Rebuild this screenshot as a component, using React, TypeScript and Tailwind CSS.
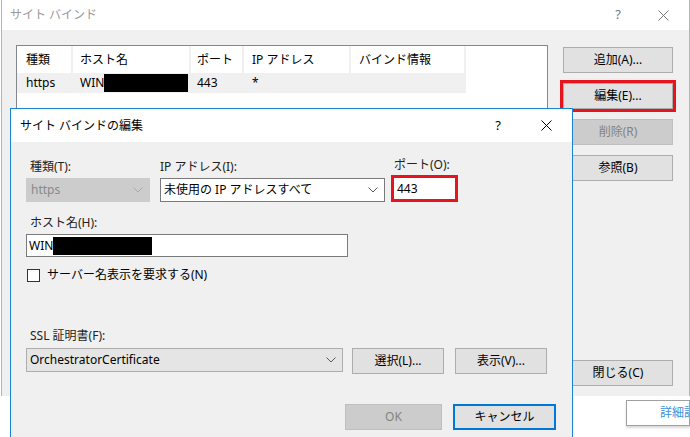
import React from 'react';

const Chevron = ({ color = '#5a5a5a' }: { color?: string }) => (
  <svg width="10" height="6" viewBox="0 0 10 6" className="shrink-0">
    <polyline points="0.5,0.5 5,5 9.5,0.5" fill="none" stroke={color} strokeWidth="1" />
  </svg>
);

const CloseX = ({ color = '#000' }: { color?: string }) => (
  <svg width="11" height="11" viewBox="0 0 11 11">
    <path d="M0.5 0.5 L10.5 10.5 M10.5 0.5 L0.5 10.5" stroke={color} strokeWidth="1" fill="none" />
  </svg>
);

const Btn = ({ label, className = '' }: { label: string; className?: string }) => (
  <div
    className={`h-[26px] flex items-center justify-center border border-[#adadad] bg-[#e1e1e1] text-[12px] text-black ${className}`}
  >
    {label}
  </div>
);

const DisabledBtn = ({ label, className = '' }: { label: string; className?: string }) => (
  <div
    className={`h-[26px] flex items-center justify-center border border-[#bfbfbf] bg-[#cccccc] text-[12px] text-[#838383] ${className}`}
  >
    {label}
  </div>
);

const EditDialog = () => (
  <div className="absolute left-[10px] top-[108px] w-[563px] h-[340px] border border-[#1883d7] bg-[#f0f0f0] flex flex-col">
    {/* Title bar */}
    <div className="h-[33px] bg-white flex items-center pl-[9px] pr-[20px] text-[12px] text-black">
      <span>サイト バインドの編集</span>
      <span className="ml-auto text-[13px] mr-[40px]">?</span>
      <CloseX />
    </div>

    <div className="pl-[15px] pr-[16px] pt-[15px] flex flex-col text-[12px] leading-[16px]">
      {/* row 1 */}
      <div className="flex items-end">
        <div className="w-[124px] flex flex-col">
          <span className="pl-[4px] text-[#222]">種類(T):</span>
          <div className="mt-[3px] h-[24px] bg-[#cccccc] border border-[#cccccc] flex items-center pl-[4px] pr-[6px] text-[#8a8a8a]">
            <span>https</span>
            <span className="ml-auto"><Chevron color="#a8a8a8" /></span>
          </div>
        </div>
        <div className="w-[225px] ml-[10px] flex flex-col">
          <span className="text-[#222]">IP アドレス(I):</span>
          <div className="mt-[3px] h-[24px] bg-white border border-[#7a7a7a] flex items-center pl-[3px] pr-[6px] text-black">
            <span>未使用の IP アドレスすべて</span>
            <span className="ml-auto"><Chevron /></span>
          </div>
        </div>
        <div className="w-[67px] ml-[6px] flex flex-col">
          <span className="pl-[3px] text-[#222]">ポート(O):</span>
          <div className="mt-[2px] h-[27px] bg-white border-[3px] border-[#e5141e] flex items-center pl-[3px] text-black">
            443
          </div>
        </div>
      </div>

      {/* host */}
      <span className="mt-[13px] pl-[4px] text-[#222]">ホスト名(H):</span>
      <div className="mt-[3px] w-[322px] h-[23px] bg-white border border-[#7a7a7a] flex items-center pl-[2px] text-black">
        <span>WIN</span>
        <span className="w-[99px] h-[18px] bg-black" />
      </div>

      {/* checkbox */}
      <div className="mt-[10px] flex items-center pl-[1px] text-black">
        <span className="w-[13px] h-[13px] border border-[#333] bg-white" />
        <span className="ml-[7px]">サーバー名表示を要求する(N)</span>
      </div>

      {/* SSL */}
      <span className="mt-[45px] pl-[4px] text-[#222]">SSL 証明書(F):</span>
      <div className="mt-[4px] flex items-start">
        <div className="w-[317px] h-[24px] bg-[#e5e5e5] border border-[#adadad] flex items-center pl-[3px] pr-[6px] text-black">
          <span>OrchestratorCertificate</span>
          <span className="ml-auto"><Chevron /></span>
        </div>
        <Btn label="選択(L)..." className="w-[92px] ml-[9px]" />
        <Btn label="表示(V)..." className="w-[92px] ml-[11px]" />
      </div>

      {/* bottom buttons */}
      <div className="mt-[30px] flex justify-end">
        <DisabledBtn label="OK" className="w-[97px]" />
        <div className="w-[103px] ml-[11px] h-[26px] flex items-center justify-center border-2 border-[#0078d7] bg-[#e1e1e1] text-black">
          キャンセル
        </div>
      </div>
    </div>
  </div>
);

const App: React.FC = () => {
  const columns = [
    { name: '種類', w: 'w-[56px]', pl: 'pl-[9px]' },
    { name: 'ホスト名', w: 'w-[118px]', pl: 'pl-[7px]' },
    { name: 'ポート', w: 'w-[53px]', pl: 'pl-[6px]' },
    { name: 'IP アドレス', w: 'w-[107px]', pl: 'pl-[8px]' },
    { name: 'バインド情報', w: 'w-[115px]', pl: 'pl-[8px]' },
  ];

  return (
    <div className="relative w-[690px] h-[437px] overflow-hidden bg-white font-['Noto_Sans','Noto_Sans_CJK_JP',sans-serif]">
      {/* Outer dialog */}
      <div className="w-[689px] h-[396px] border-r border-l border-[#b5b5b5] ml-[1px] flex flex-col bg-[#f0f0f0]">
        <div className="h-[30px] bg-white flex items-center pl-[8px] pr-[20px] text-[12px] text-[#999999]">
          <span>サイト バインド</span>
          <span className="ml-auto text-[13px] text-[#777] mr-[37px]">?</span>
          <CloseX color="#777" />
        </div>

        <div className="flex-1 flex pl-[14px] pt-[15px] pb-[10px]">
          {/* list */}
          <div className="w-[532px] h-[300px] border border-[#828790] bg-white">
            <div className="flex h-[27px] text-[12px] text-black">
              {columns.map((c) => (
                <div key={c.name} className={`${c.w} ${c.pl} flex items-center border-r-2 border-[#f0f0f0]`}>
                  {c.name}
                </div>
              ))}
            </div>
            <div className="flex h-[20px] w-[449px] bg-[#f0f0f0] text-[12px] text-black items-center">
              <div className="w-[56px] pl-[9px]">https</div>
              <div className="w-[118px] pl-[7px] flex items-center">
                <span>WIN</span>
                <span className="w-[84px] h-[18px] bg-black" />
              </div>
              <div className="w-[53px] pl-[6px]">443</div>
              <div className="w-[107px] pl-[8px]">*</div>
            </div>
          </div>

          {/* buttons */}
          <div className="ml-[15px] w-[110px] flex flex-col gap-[10px] pt-[2px]">
            <Btn label="追加(A)..." />
            <Btn label="編集(E)..." className="outline-[3px] outline-[#e5141e] outline-offset-0" />
            <DisabledBtn label="削除(R)" />
            <Btn label="参照(B)" />
            <Btn label="閉じる(C)" className="mt-auto" />
          </div>
        </div>
      </div>

      {/* underlying window strip */}
      <div className="h-[41px] flex justify-end pt-[4px]">
        <div className="w-[64px] h-[26px] border border-[#a0a0a0] bg-white shadow-[0_2px_2px_rgba(0,0,0,0.15)] overflow-hidden whitespace-nowrap pl-[33px] flex items-center text-[12px] text-[#3c8fd8]">
          詳細設定
        </div>
      </div>

      <EditDialog />
    </div>
  );
};

export default App;
